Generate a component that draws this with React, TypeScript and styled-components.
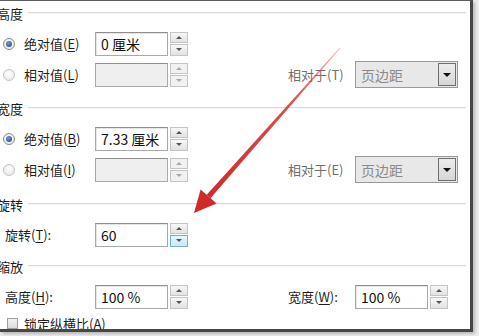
import React from "react";
import styled, { createGlobalStyle, css } from "styled-components";

const Global = createGlobalStyle`
  html, body { margin: 0; padding: 0; background: #ececec; }
  body { width: 479px; height: 336px; overflow: hidden; font-family: "Noto Sans CJK SC", "Noto Sans", sans-serif; }
`;

const Page = styled.div`
  position: relative;
  width: 479px;
  height: 336px;
  overflow: hidden;
  background: #ececec;
`;

const Dialog = styled.div`
  width: 470px;
  height: 328px;
  background: #fff;
  border-top: 1px solid #5e5e5e;
  border-right: 3px solid #474747;
  border-bottom: 3px solid #474747;
  box-shadow: 2px 2px 3px rgba(0, 0, 0, 0.22);
  overflow: hidden;
  display: flex;
  flex-direction: column;
  color: #1f1f1f;
  font-size: 13px;
`;

const Heading = styled.div<{ $mt?: number }>`
  height: 24px;
  flex: none;
  display: flex;
  align-items: center;
  gap: 5px;
  margin: ${(p) => p.$mt ?? 0}px 4px 3px -3px;
  font-size: 13px;
  color: #1c1c1c;
  &::after {
    content: "";
    flex: 1;
    border-top: 1px solid #dadada;
    border-bottom: 1px solid #f6f6f6;
  }
`;

const Row = styled.div<{ $h?: number }>`
  height: ${(p) => p.$h ?? 31}px;
  flex: none;
  display: grid;
  grid-template-columns: 95px 193px 67px 110px;
  align-items: center;
`;

const LeftLabel = styled.div<{ $pl: number; $gap?: number }>`
  display: flex;
  align-items: center;
  gap: ${(p) => p.$gap ?? 9}px;
  padding-left: ${(p) => p.$pl}px;
  white-space: nowrap;
`;

const RightLabel = styled.div<{ $muted?: boolean }>`
  white-space: nowrap;
  color: ${(p) => (p.$muted ? "#6f6f6f" : "#1f1f1f")};
`;

const U = styled.span`
  text-decoration: underline;
  text-underline-offset: 2px;
`;

const Radio = styled.span<{ $on?: boolean }>`
  position: relative;
  flex: none;
  width: 12px;
  height: 12px;
  box-sizing: border-box;
  border-radius: 50%;
  border: 1px solid ${(p) => (p.$on ? "#8d8d8d" : "#c4c4c4")};
  background: radial-gradient(circle at 50% 40%, #ffffff, #e4e4e4);
  ${(p) =>
    p.$on &&
    css`
      &::after {
        content: "";
        position: absolute;
        inset: 2px;
        border-radius: 50%;
        background: radial-gradient(circle at 40% 35%, #7b9ad0, #1e3c78);
      }
    `}
`;

const Check = styled.span`
  flex: none;
  width: 11px;
  height: 11px;
  box-sizing: border-box;
  border: 1px solid #a0a0a0;
  background: linear-gradient(#f2f2f2, #dcdcdc);
`;

const Field = styled.div`
  display: flex;
  align-items: center;
  gap: 2px;
`;

const Box = styled.div<{ $disabled?: boolean }>`
  width: 73px;
  height: 24px;
  box-sizing: border-box;
  border: 1px solid #a9a9a9;
  border-top-color: #8f8f8f;
  background: ${(p) => (p.$disabled ? "#efefef" : "#fff")};
  box-shadow: ${(p) => (p.$disabled ? "none" : "inset 1px 1px 0 #e6e6e6")};
  display: flex;
  align-items: center;
  padding-left: 5px;
  font-size: 14px;
  color: #111;
  white-space: nowrap;
`;

const Spinner = styled.div`
  width: 18px;
  height: 24px;
  display: flex;
  flex-direction: column;
  gap: 1px;
`;

const SpinBtn = styled.div<{ $hover?: boolean; $disabled?: boolean }>`
  flex: 1;
  box-sizing: border-box;
  border: 1px solid ${(p) => (p.$hover ? "#7aaec4" : "#c4c4c4")};
  background: ${(p) =>
    p.$hover ? "linear-gradient(#e4f5fb, #c9e9f4)" : p.$disabled ? "#f1f1f1" : "linear-gradient(#f7f7f7, #e2e2e2)"};
  display: flex;
  align-items: center;
  justify-content: center;
`;

const Tri = styled.span<{ $down?: boolean; $faint?: boolean }>`
  width: 0;
  height: 0;
  border-left: 3px solid transparent;
  border-right: 3px solid transparent;
  ${(p) =>
    p.$down
      ? css`border-top: 3px solid ${p.$faint ? "#a8a8a8" : "#555"};`
      : css`border-bottom: 3px solid ${p.$faint ? "#a8a8a8" : "#555"};`}
`;

const Select = styled.div`
  width: 103px;
  height: 27px;
  box-sizing: border-box;
  border: 1px solid #9a9a9a;
  background: #e8e8e8;
  display: flex;
  align-items: stretch;
  font-size: 14px;
  color: #8a8a8a;
`;

const SelectText = styled.div`
  flex: 1;
  display: flex;
  align-items: center;
  padding-left: 5px;
`;

const SelectBtn = styled.div`
  width: 18px;
  margin: 1px;
  box-sizing: border-box;
  border: 1px solid #6f6f6f;
  background: linear-gradient(#ececec, #d6d6d6);
  display: flex;
  align-items: center;
  justify-content: center;
`;

const DownArrow = styled.span`
  width: 0;
  height: 0;
  border-left: 4px solid transparent;
  border-right: 4px solid transparent;
  border-top: 4px solid #111;
`;

const Overlay = styled.svg`
  position: absolute;
  left: 0;
  top: 0;
  pointer-events: none;
`;

const Spin = ({ hover, disabled }: { hover?: boolean; disabled?: boolean }) => (
  <Spinner>
    <SpinBtn $disabled={disabled}>
      <Tri $faint={disabled} />
    </SpinBtn>
    <SpinBtn $hover={hover} $disabled={disabled}>
      <Tri $down $faint={disabled} />
    </SpinBtn>
  </Spinner>
);

const NumField = ({ value, disabled, hover }: { value?: string; disabled?: boolean; hover?: boolean }) => (
  <Field>
    <Box $disabled={disabled}>{value}</Box>
    <Spin hover={hover} disabled={disabled} />
  </Field>
);

const RelSelect = () => (
  <Select>
    <SelectText>页边距</SelectText>
    <SelectBtn>
      <DownArrow />
    </SelectBtn>
  </Select>
);

export default function App() {
  return (
    <Page>
      <Global />
      <Dialog>
        <Heading>高度</Heading>
        <Row>
          <LeftLabel $pl={3}>
            <Radio $on />
            <span>
              绝对值(<U>E</U>)
            </span>
          </LeftLabel>
          <NumField value="0 厘米" />
        </Row>
        <Row>
          <LeftLabel $pl={3}>
            <Radio />
            <span>
              相对值(<U>L</U>)
            </span>
          </LeftLabel>
          <NumField disabled />
          <RightLabel $muted>相对于(T)</RightLabel>
          <RelSelect />
        </Row>

        <Heading $mt={6}>宽度</Heading>
        <Row>
          <LeftLabel $pl={3}>
            <Radio $on />
            <span>
              绝对值(<U>B</U>)
            </span>
          </LeftLabel>
          <NumField value="7.33 厘米" />
        </Row>
        <Row>
          <LeftLabel $pl={3}>
            <Radio />
            <span>
              相对值(<U>I</U>)
            </span>
          </LeftLabel>
          <NumField disabled />
          <RightLabel $muted>相对于(E)</RightLabel>
          <RelSelect />
        </Row>

        <Heading $mt={7}>旋转</Heading>
        <Row>
          <LeftLabel $pl={5}>
            <span>
              旋转(<U>T</U>):
            </span>
          </LeftLabel>
          <NumField value="60" hover />
        </Row>

        <Heading $mt={4}>缩放</Heading>
        <Row>
          <LeftLabel $pl={5}>
            <span>
              高度(<U>H</U>):
            </span>
          </LeftLabel>
          <NumField value="100 %" />
          <RightLabel>
            宽度(<U>W</U>):
          </RightLabel>
          <NumField value="100 %" />
        </Row>
        <Row $h={22}>
          <LeftLabel $pl={7} $gap={6}>
            <Check />
            <span>锁定纵横比(A)</span>
          </LeftLabel>
        </Row>
      </Dialog>

      <Overlay width="479" height="336" viewBox="0 0 479 336">
        <defs>
          <linearGradient id="shaft" x1="340" y1="48" x2="205" y2="200" gradientUnits="userSpaceOnUse">
            <stop offset="0" stopColor="#d83a3a" stopOpacity="0.35" />
            <stop offset="0.35" stopColor="#d3302f" stopOpacity="0.85" />
            <stop offset="1" stopColor="#d12a2a" stopOpacity="1" />
          </linearGradient>
        </defs>
        <polygon points="340.4,48.3 339.6,47.7 206.7,194.8 210.5,198.2" fill="url(#shaft)" />
        <polygon points="194,213 200.6,189.5 216.6,203.6" fill="#d12a2a" />
      </Overlay>
    </Page>
  );
}
